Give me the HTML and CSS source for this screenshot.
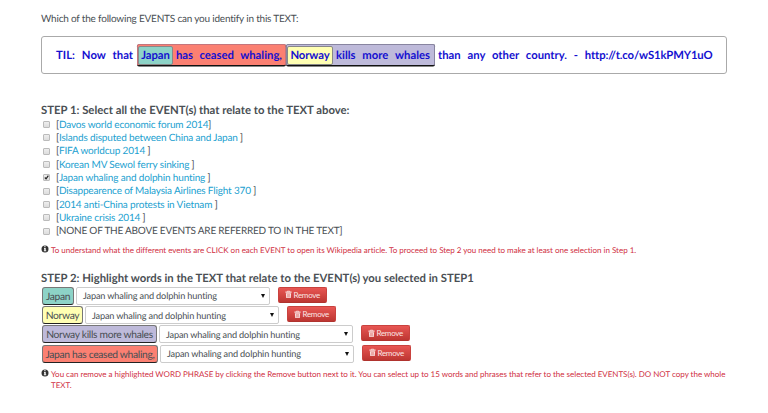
FILE: index.html
```html
<!DOCTYPE html>
<html lang="en">
<head>
<meta charset="utf-8">
<title>Event annotation</title>
<link rel="stylesheet" href="styles.css">
</head>
<body>
<svg class="defs" width="0" height="0">
  <symbol id="info" viewBox="0 0 8 8"><circle cx="4" cy="4" r="3.5" fill="#333"/><path d="M3.2 1.3h1.4v1H3.2zM3 3h1.7v2.4h.6v.8H2.8v-.8h.5V3.8H3z" fill="#fff"/></symbol>
  <symbol id="trash" viewBox="0 0 8 9"><path d="M2.6 1.2V.3h2.8v.9h2.1v1.2h-7V1.2zM3.3 1.2h1.4V.9H3.3zM1 3h6l-.4 5.6H1.4zM2.3 3.8v4h.4v-4zM3.8 3.8v4h.4v-4zM5.3 3.8v4h.4v-4z" fill="#f9dfde" fill-rule="evenodd"/></symbol>
</svg>
<main class="page">
  <p class="intro">Which of the following EVENTS can you identify in this TEXT:</p>
  <section class="tweet">
    <span class="words lead">TIL: Now that</span>
    <span class="phrase red"><span class="word teal">Japan</span><span class="words ceased">has ceased whaling,</span></span>
    <span class="phrase purple"><span class="word yellow">Norway</span><span class="words kills">kills more whales</span></span>
    <span class="words tail">than any other country. - <span class="url">http://t.co/wS1kPMY1uO</span></span>
  </section>
  <h2 class="step-one">STEP 1: Select all the EVENT(s) that relate to the TEXT above:</h2>
  <ul class="events">
    <li><i class="check"></i><span>[<a>Davos world economic forum 2014</a>]</span></li>
    <li><i class="check"></i><span>[<a>Islands disputed between China and Japan </a>]</span></li>
    <li><i class="check"></i><span>[<a>FIFA worldcup 2014 </a>]</span></li>
    <li><i class="check"></i><span>[<a>Korean MV Sewol ferry sinking </a>]</span></li>
    <li><i class="check"><svg viewBox="0 0 6 6"><path d="M1 3l1.5 1.7L5.2.8" fill="none" stroke="#222" stroke-width="1.4"/></svg></i><span>[<a>Japan whaling and dolphin hunting </a>]</span></li>
    <li><i class="check"></i><span>[<a>Disappearence of Malaysia Airlines Flight 370 </a>]</span></li>
    <li><i class="check"></i><span>[<a>2014 anti-China protests in Vietnam </a>]</span></li>
    <li><i class="check"></i><span>[<a>Ukraine crisis 2014 </a>]</span></li>
    <li><i class="check"></i><span class="none">[NONE OF THE ABOVE EVENTS ARE REFERRED TO IN THE TEXT]</span></li>
  </ul>
  <p class="note"><svg class="info"><use href="#info"/></svg><span>To understand what the different events are CLICK on each EVENT to open its Wikipedia article. To proceed to Step 2 you need to make at least one selection in Step 1.</span></p>
  <h2 class="step-two">STEP 2: Highlight words in the TEXT that relate to the EVENT(s) you selected in STEP1</h2>
  <div class="rows">
    <div class="row r1"><span class="tag teal">Japan</span><div class="select">Japan whaling and dolphin hunting<i class="arrow"></i></div><button><svg><use href="#trash"/></svg>Remove</button></div>
    <div class="row r2"><span class="tag yellow">Norway</span><div class="select">Japan whaling and dolphin hunting<i class="arrow"></i></div><button><svg><use href="#trash"/></svg>Remove</button></div>
    <div class="row r3"><span class="tag purple">Norway kills more whales</span><div class="select">Japan whaling and dolphin hunting<i class="arrow"></i></div><button><svg><use href="#trash"/></svg>Remove</button></div>
    <div class="row r4"><span class="tag red">Japan has ceased whaling,</span><div class="select">Japan whaling and dolphin hunting<i class="arrow"></i></div><button><svg><use href="#trash"/></svg>Remove</button></div>
  </div>
  <p class="note last"><svg class="info"><use href="#info"/></svg><span>You can remove a highlighted WORD PHRASE by clicking the Remove button next to it. You can select up to 15 words and phrases that refer to the selected EVENTS(s). DO NOT copy the whole<br>TEXT.</span></p>
</main>
</body>
</html>
```
FILE: styles.css
```css
* { box-sizing: border-box; }
body { margin: 0; background: #fff; color: #4a4f54; font-family: Lato, sans-serif; text-rendering: geometricPrecision; }
.defs { position: absolute; }
.page { width: 768px; height: 413px; padding: 13px 41px 0; overflow: hidden; white-space: nowrap; }
p, h2, ul { margin: 0; padding: 0; }
.intro { height: 23px; font-size: 10px; letter-spacing: -.2px; line-height: 13px; }
.tweet { display: flex; align-items: center; width: 686px; height: 38px; padding-left: 14px; border: 1px solid #aaa; border-radius: 3px; color: #1410d0; font-size: 11.3px; font-weight: 700; line-height: 16px; }
.words { display: block; padding-top: 1px; text-align: justify; text-align-last: justify; }
.lead { width: 77px; margin-right: 4px; }
.phrase { display: flex; align-items: center; height: 22px; border: 1px solid #c5757c; border-bottom: 1px solid #111; border-radius: 2px; box-shadow: 0 .5px 0 #111; }
.phrase.red { width: 149px; }
.phrase.purple { width: 149px; margin-right: 3px; border-color: #8885a0; border-bottom-color: #111; }
.word { height: 19px; padding-top: .5px; line-height: 18px; border: 1px solid #888; border-radius: 2px; text-align: center; letter-spacing: -.1px; }
.word.teal { width: 35px; margin-right: 3px; }
.word.yellow { width: 46px; margin-right: 3px; }
.ceased { width: 106px; }
.kills { width: 94px; }
.tail { width: 274.5px; }
.url { letter-spacing: -.13px; }
.teal { background: #8dd3c7; }
.yellow { background: #ffffb3; }
.purple { background: #bebada; }
.red { background: #fb8072; }
h2 { font-size: 11.32px; line-height: 14px; font-weight: 700; }
.step-one { margin-top: 30px; }
.events { list-style: none; padding-top: .5px; }
.events li { display: flex; align-items: center; height: 13.35px; font-size: 10px; letter-spacing: -.16px; line-height: 13.35px; }
.none { letter-spacing: -.22px; }
.check { display: block; width: 7px; height: 7px; margin: 0 6px 1.4px 2px; border: 1px solid #bbb; border-radius: 1px; background: linear-gradient(#eee, #ddd); }
.check svg { display: block; width: 5px; height: 5px; }
a { color: #1b9fd0; white-space: pre; }
.note { display: flex; margin-top: 6px; color: #d02f3f; font-size: 8px; letter-spacing: -.01px; line-height: 11px; }
.info { flex: none; width: 8px; height: 8px; margin-right: 2px; }
.step-two { margin-top: 16px; }
.rows { padding-top: 1px; }
.row { display: flex; height: 19.45px; align-items: flex-start; }
.tag { height: 18px; margin-left: 1px; border: 1px solid #777; border-bottom-color: #222; border-radius: 3px; font-size: 10.3px; letter-spacing: -.33px; line-height: 18px; text-align: center; }
.select { display: flex; align-items: center; justify-content: space-between; width: 194px; height: 18px; margin: 0 8px 0 2px; padding: 0 4px 0 6px; border: 1px solid #ccc; border-radius: 2px; font-size: 9.2px; letter-spacing: -.16px; }
.arrow { border: 2.5px solid transparent; border-top: 4px solid #111; border-bottom: 0; }
button { display: flex; align-items: center; justify-content: center; width: 49px; height: 16px; margin: 0; padding: 0; border: 1px solid #c9423e; border-bottom-color: #b0332e; border-radius: 2px; background: linear-gradient(#e85653, #bd3632); color: #fbe5e4; font: 8px Lato, sans-serif; letter-spacing: -.25px; }
button svg { width: 7px; height: 9px; margin-right: 1.5px; }
.r1 .tag { width: 32px; }
.r2 .tag { width: 41px; }
.r3 .tag { width: 115px; }
.r4 .tag { width: 116px; }
.note.last { margin-top: 5px; }
```
